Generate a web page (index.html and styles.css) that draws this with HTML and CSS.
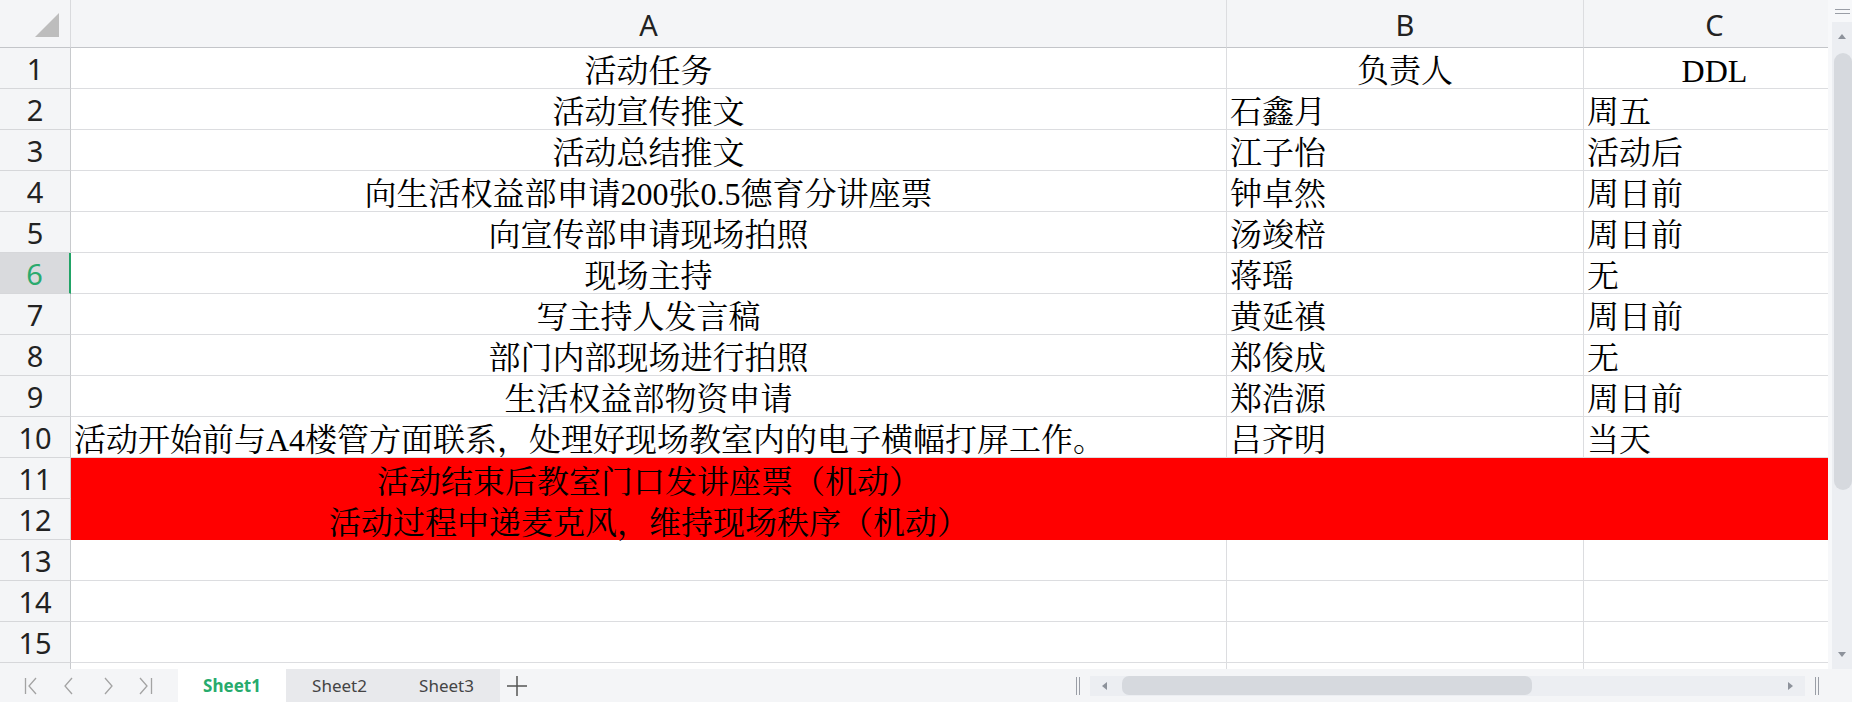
FILE: index.html
```html
<!DOCTYPE html>
<html lang="zh-CN">
<head>
<meta charset="utf-8">
<title>Sheet1</title>
<link rel="stylesheet" href="styles.css">
</head>
<body>
<div class="app">
  <div class="main">
    <div class="sheet">
      <div class="grid">
        <div class="corner"><svg width="24" height="24" viewBox="0 0 24 24"><polygon points="24,0 24,24 0,24" fill="#bdbdbd"/></svg></div>
        <div class="colhead">A</div>
        <div class="colhead">B</div>
        <div class="colhead">C</div>

        <div class="rowhead">1</div>
        <div class="cell center">活动任务</div>
        <div class="cell center">负责人</div>
        <div class="cell center">DDL</div>

        <div class="rowhead">2</div>
        <div class="cell center">活动宣传推文</div>
        <div class="cell">石鑫月</div>
        <div class="cell">周五</div>

        <div class="rowhead">3</div>
        <div class="cell center">活动总结推文</div>
        <div class="cell">江子怡</div>
        <div class="cell">活动后</div>

        <div class="rowhead">4</div>
        <div class="cell center">向生活权益部申请200张0.5德育分讲座票</div>
        <div class="cell">钟卓然</div>
        <div class="cell">周日前</div>

        <div class="rowhead">5</div>
        <div class="cell center">向宣传部申请现场拍照</div>
        <div class="cell">汤竣棓</div>
        <div class="cell">周日前</div>

        <div class="rowhead selected">6</div>
        <div class="cell center">现场主持</div>
        <div class="cell">蒋瑶</div>
        <div class="cell">无</div>

        <div class="rowhead">7</div>
        <div class="cell center">写主持人发言稿</div>
        <div class="cell">黄延禛</div>
        <div class="cell">周日前</div>

        <div class="rowhead">8</div>
        <div class="cell center">部门内部现场进行拍照</div>
        <div class="cell">郑俊成</div>
        <div class="cell">无</div>

        <div class="rowhead">9</div>
        <div class="cell center">生活权益部物资申请</div>
        <div class="cell">郑浩源</div>
        <div class="cell">周日前</div>

        <div class="rowhead">10</div>
        <div class="cell">活动开始前与A4楼管方面联系，处理好现场教室内的电子横幅打屏工作。</div>
        <div class="cell">吕齐明</div>
        <div class="cell">当天</div>

        <div class="rowhead">11</div>
        <div class="redblock">
          <div class="redline">活动结束后教室门口发讲座票（机动）</div>
          <div class="redline">活动过程中递麦克风，维持现场秩序（机动）</div>
        </div>
        <div class="rowhead">12</div>

        <div class="rowhead">13</div>
        <div class="cell"></div><div class="cell"></div><div class="cell"></div>
        <div class="rowhead">14</div>
        <div class="cell"></div><div class="cell"></div><div class="cell"></div>
        <div class="rowhead">15</div>
        <div class="cell"></div><div class="cell"></div><div class="cell"></div>
        <div class="rowhead"></div>
        <div class="cell"></div><div class="cell"></div><div class="cell"></div>
      </div>
    </div>
    <div class="vscroll">
      <div class="vs-top"><span class="grip-h"></span><span class="grip-h"></span></div>
      <div class="vs-track">
        <span class="arrow-up"></span>
        <div class="vs-thumb"></div>
        <div class="vs-fill"></div>
        <span class="arrow-down"></span>
      </div>
    </div>
  </div>
  <div class="bottombar">
    <div class="nav">
      <svg width="140" height="33" viewBox="0 0 140 33" fill="none" stroke="#a3a3a3" stroke-width="1.3">
        <line x1="5.5" y1="9" x2="5.5" y2="25"/>
        <polyline points="16,9 9,17 16,25"/>
        <polyline points="52,9 45,17 52,25"/>
        <polyline points="85,9 92,17 85,25"/>
        <polyline points="120,9 127,17 120,25"/>
        <line x1="131.5" y1="9" x2="131.5" y2="25"/>
      </svg>
    </div>
    <div class="tabs">
      <div class="tab active">Sheet1</div>
      <div class="tab">Sheet2</div>
      <div class="tab">Sheet3</div>
    </div>
    <div class="add">
      <svg width="22" height="22" viewBox="0 0 22 22" stroke="#555" stroke-width="1.5"><line x1="1" y1="11" x2="21" y2="11"/><line x1="11" y1="1" x2="11" y2="21"/></svg>
    </div>
    <div class="spacer"></div>
    <div class="hscroll">
      <span class="grip-v"></span>
      <div class="hs-track">
        <span class="arrow-left"></span>
        <div class="hs-thumb"></div>
        <div class="hs-fill"></div>
        <span class="arrow-right"></span>
      </div>
      <span class="grip-v"></span>
    </div>
  </div>
</div>
</body>
</html>
```

FILE: styles.css
```css
html, body {
  margin: 0;
  padding: 0;
}
body {
  width: 1852px;
  height: 702px;
  overflow: hidden;
  background: #ffffff;
  font-family: "Noto Sans", "Noto Sans CJK SC", sans-serif;
}
.app {
  display: flex;
  flex-direction: column;
  height: 702px;
}
.main {
  display: flex;
  height: 669px;
}
.sheet {
  width: 1828px;
  height: 669px;
  overflow: hidden;
  flex: none;
}
.grid {
  display: grid;
  grid-template-columns: 71px 1156px 357px 262px;
  grid-template-rows: 48px repeat(16, 41px);
}
.corner, .colhead, .rowhead, .cell {
  box-sizing: border-box;
  border-right: 1px solid #dcdde0;
  border-bottom: 1px solid #dcdde0;
  overflow: hidden;
}
.corner {
  background: #f4f5f7;
  border-bottom-color: #c3c5c9;
  border-right-color: #d9dadd;
  display: flex;
  justify-content: flex-end;
  align-items: flex-end;
  padding: 0 11px 10px 0;
}
.corner svg { display: block; }
.colhead {
  background: #f4f5f7;
  border-bottom-color: #c3c5c9;
  display: flex;
  justify-content: center;
  align-items: center;
  font-size: 29px;
  color: #222;
  padding-top: 2px;
}
.rowhead {
  background: #f4f5f7;
  border-right-color: #c8cacd;
  border-bottom-color: #d6d7da;
  display: flex;
  justify-content: center;
  align-items: center;
  font-size: 29px;
  color: #222;
}
.rowhead.selected {
  background: #d9dadd;
  color: #2aaa6e;
  border-right: 2px solid #21a366;
}
.cell, .redline {
  display: flex;
  align-items: flex-end;
  padding: 0 3px 1px 3px;
  font-family: "Liberation Serif", "Noto Serif CJK SC", "Noto Sans CJK SC", serif;
  font-size: 32px;
  line-height: 32px;
  color: #000;
  white-space: nowrap;
  font-weight: 400;
}
.cell.center, .redline {
  justify-content: center;
}
.redblock {
  grid-column: 2 / 5;
  grid-row: 12 / 14;
  background: #ff0000;
  display: grid;
  grid-template-columns: 1156px;
  grid-template-rows: 41px 41px;
}
.redline {
  box-sizing: border-box;
}

/* vertical scrollbar */
.vscroll {
  width: 24px;
  flex: none;
  display: flex;
  flex-direction: column;
  background: #f7f8fa;
}
.vs-top {
  height: 22px;
  display: flex;
  flex-direction: column;
  justify-content: center;
  align-items: flex-end;
  gap: 3px;
  padding-right: 2px;
}
.grip-h {
  display: block;
  width: 15px;
  height: 1px;
  background: #9a9ea6;
}
.vs-track {
  flex: 1;
  margin-left: 4px;
  background: #eceef2;
  display: flex;
  flex-direction: column;
  align-items: center;
}
.arrow-up {
  margin-top: 12px;
  width: 0;
  height: 0;
  border-left: 4px solid transparent;
  border-right: 4px solid transparent;
  border-bottom: 5px solid #8d929b;
}
.vs-thumb {
  margin-top: 14px;
  margin-left: 2px;
  width: 18px;
  height: 437px;
  background: #d6d9de;
  border-radius: 9px;
}
.vs-fill { flex: 1; }
.arrow-down {
  margin-bottom: 12px;
  width: 0;
  height: 0;
  border-left: 4px solid transparent;
  border-right: 4px solid transparent;
  border-top: 5px solid #8d929b;
}

/* bottom bar */
.bottombar {
  height: 33px;
  display: flex;
  align-items: stretch;
  background: #f4f5f7;
}
.nav {
  width: 158px;
  padding-left: 20px;
  display: flex;
  align-items: center;
}
.nav svg { display: block; }
.tabs {
  display: flex;
  background: #e8e9ec;
}
.tab {
  width: 107px;
  display: flex;
  align-items: center;
  justify-content: center;
  font-family: "Noto Sans", sans-serif;
  font-size: 17px;
  color: #444;
}
.tab.active {
  width: 108px;
  background: #ffffff;
  color: #27ab6d;
  font-weight: 700;
}
.add {
  width: 32px;
  display: flex;
  align-items: center;
  padding-left: 6px;
}
.add svg { display: block; }
.spacer { flex: 1; }
.hscroll {
  display: flex;
  align-items: center;
  gap: 10px;
  padding-right: 33px;
}
.grip-v {
  width: 4px;
  height: 18px;
  border-left: 1px solid #9a9ea6;
  border-right: 1px solid #9a9ea6;
  box-sizing: border-box;
}
.hs-track {
  width: 715px;
  height: 20px;
  background: #eceef2;
  display: flex;
  align-items: center;
}
.arrow-left {
  margin-left: 12px;
  width: 0;
  height: 0;
  border-top: 4px solid transparent;
  border-bottom: 4px solid transparent;
  border-right: 5px solid #8d929b;
}
.hs-thumb {
  margin-left: 15px;
  width: 410px;
  height: 19px;
  background: #d6d9de;
  border-radius: 7px;
}
.hs-fill { flex: 1; }
.arrow-right {
  margin-right: 12px;
  width: 0;
  height: 0;
  border-top: 4px solid transparent;
  border-bottom: 4px solid transparent;
  border-left: 5px solid #8d929b;
}
```
